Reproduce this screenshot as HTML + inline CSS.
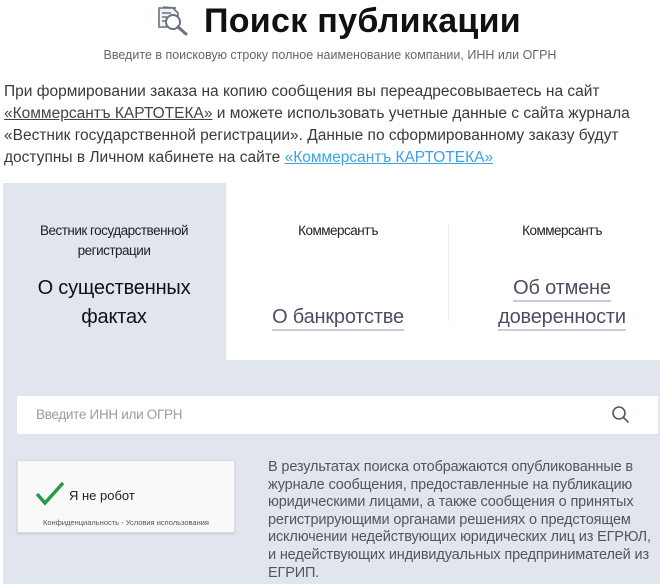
<!DOCTYPE html>
<html><head><meta charset="utf-8"><style>
*{margin:0;padding:0;box-sizing:border-box}
body{width:660px;height:584px;overflow:hidden;background:#fff;font-family:"Liberation Sans",sans-serif;color:#333;position:relative}
.abs{position:absolute}
h1{position:absolute;left:204px;top:2px;font-size:34px;font-weight:bold;color:#111;white-space:nowrap;letter-spacing:0.3px}
.sub{position:absolute;left:0;width:660px;top:48px;text-align:center;font-size:12.5px;color:#666}
.intro{position:absolute;left:4px;top:81px;width:655px;font-size:15.5px;line-height:22px;color:#3a3a3a;letter-spacing:0}
.intro a.d{color:#444;text-decoration:underline}
.intro a.b{color:#3aa3e3;text-decoration:underline}
.panel{position:absolute;left:3px;top:183px;width:657px;height:401px;background:#e1e5ee}
.tabs{position:absolute;left:226px;top:183px;width:434px;height:177px;background:#fff}
.sm{font-size:13.5px;color:#222;text-align:center;line-height:20px;letter-spacing:-0.5px}
.big{font-size:20px;text-align:center;line-height:29px;letter-spacing:-0.2px}
.lk{color:#4a4f63;border-bottom:2px solid #c8ccd8;padding-bottom:1px}
.inp{position:absolute;left:17px;top:396px;width:641px;height:38px;background:#fff;border-radius:2px}
.cap{position:absolute;left:17px;top:460px;width:218px;height:73px;background:#f9f9f9;border:1px solid #ddd;box-shadow:0 1px 2px rgba(0,0,0,.15)}
.rt{position:absolute;left:268px;top:459px;white-space:nowrap;font-size:14.5px;line-height:17.6px;color:#555;letter-spacing:-0.15px}
</style></head><body>
<svg class="abs" style="left:156px;top:5px" width="40" height="34" viewBox="0 0 40 34" fill="none" stroke="#6b6f80" stroke-width="1.6">
<path d="M3 3h14l5 5v14H3z" fill="#f2f3f6"/><path d="M7 2l13 1" /><path d="M6 8h9M6 12h5M6 16h4"/>
<circle cx="17" cy="17" r="7" fill="#fff" stroke-width="2"/><path d="M22 22l8 7" stroke-width="3" stroke-linecap="round"/></svg>
<h1>Поиск публикации</h1>
<div class="sub">Введите в поисковую строку полное наименование компании, ИНН или ОГРН</div>
<div class="intro">При формировании заказа на копию сообщения вы переадресовываетесь на сайт <a class="d">«Коммерсантъ КАРТОТЕКА»</a> и можете использовать учетные данные с сайта журнала «Вестник государственной регистрации». Данные по сформированному заказу будут доступны в Личном кабинете на сайте <a class="b">«Коммерсантъ КАРТОТЕКА»</a></div>
<div class="panel"></div>
<div class="tabs"></div>
<div class="abs" style="left:448px;top:225px;width:1px;height:96px;background:#eceef3"></div>
<div class="abs sm" style="left:14px;top:221px;width:200px">Вестник государственной<br>регистрации</div>
<div class="abs big" style="left:14px;top:274px;width:200px;color:#111">О существенных<br>фактах</div>
<div class="abs sm" style="left:238px;top:221px;width:200px">Коммерсантъ</div>
<div class="abs big" style="left:238px;top:303px;width:200px"><span class="lk">О банкротстве</span></div>
<div class="abs sm" style="left:462px;top:221px;width:200px">Коммерсантъ</div>
<div class="abs big" style="left:462px;top:274px;width:200px"><span class="lk">Об отмене</span><br><span class="lk">доверенности</span></div>
<div class="inp"><span class="abs" style="left:19px;top:11px;font-size:13.5px;color:#9a9ca6;letter-spacing:-0.3px">Введите ИНН или ОГРН</span>
<svg class="abs" style="left:594px;top:9px" width="20" height="20" viewBox="0 0 20 20" fill="none" stroke="#555a6a" stroke-width="1.6"><circle cx="8" cy="8" r="6"/><path d="M12.5 12.5l5 5"/></svg></div>
<div class="cap">
<svg class="abs" style="left:17px;top:20px" width="30" height="26" viewBox="0 0 30 26" fill="none" stroke="#2a9a48" stroke-width="3.5"><path d="M2 13l8 9L28 2"/></svg>
<span class="abs" style="left:51px;top:27px;font-size:13px;color:#222">Я не робот</span>
<span class="abs" style="left:0;width:216px;text-align:center;top:57px;font-size:7.5px;color:#555">Конфиденциальность - Условия использования</span>
</div>
<div class="rt">В результатах поиска отображаются опубликованные в<br>журнале сообщения, предоставленные на публикацию<br>юридическими лицами, а также сообщения о принятых<br>регистрирующими органами решениях о предстоящем<br>исключении недействующих юридических лиц из ЕГРЮЛ,<br>и недействующих индивидуальных предпринимателей из<br>ЕГРИП.</div>
</body></html>
